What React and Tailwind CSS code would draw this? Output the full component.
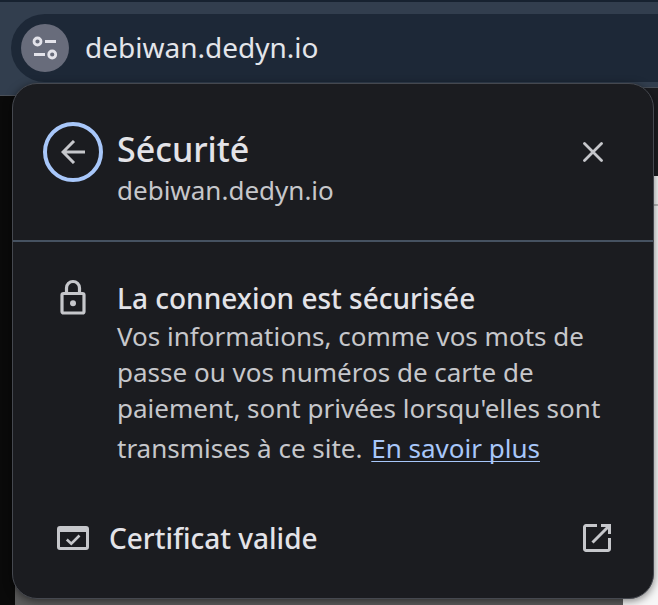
function TuneIcon() {
  return (
    <svg viewBox="0 0 26 24" className="h-6 w-[26px]" fill="none" stroke="currentColor" strokeWidth="2.800" aria-hidden="true">
      <circle cx="5.500" cy="5.500" r="3.500" />
      <path d="M13 5.500h11M2 18.500h11" />
      <circle cx="20.200" cy="18.500" r="3.500" />
    </svg>
  );
}

function BackIcon() {
  return (
    <svg viewBox="0 0 24 24" className="h-6 w-6" fill="none" stroke="currentColor" strokeWidth="3" aria-hidden="true">
      <path d="M24 12H2M13 1L2 12l11 11" />
    </svg>
  );
}

function CloseIcon() {
  return (
    <svg viewBox="0 0 20 20" className="h-5 w-5" fill="none" stroke="currentColor" strokeWidth="2.800" strokeLinecap="round" aria-hidden="true">
      <path d="M1.500 1.500l17 17M18.500 1.500l-17 17" />
    </svg>
  );
}

function LockIcon() {
  return (
    <svg viewBox="0 0 26 38" className="h-[38px] w-[26px]" fill="none" stroke="currentColor" strokeWidth="3.200" aria-hidden="true">
      <rect x="2" y="15.500" width="22" height="19.500" rx="1.500" />
      <path d="M6.500 15V10a6.500 6.500 0 0 1 13 0V15" />
      <circle cx="13" cy="25.200" r="3" fill="currentColor" stroke="none" />
    </svg>
  );
}

function CertificateIcon() {
  return (
    <svg viewBox="0 0 32 24" className="h-6 w-8" fill="none" stroke="currentColor" strokeWidth="3" aria-hidden="true">
      <rect x="1.500" y="1.500" width="29" height="21" rx="1.500" />
      <path d="M1.500 4h29" strokeWidth="4" />
      <path d="M9.800 13.500l4.500 4.200L22.500 9.500" strokeWidth="2.600" />
    </svg>
  );
}

function OpenIcon() {
  return (
    <svg viewBox="0 0 28 28" className="h-7 w-7" fill="none" stroke="currentColor" strokeWidth="3" aria-hidden="true">
      <path d="M14 1.500H3A1.500 1.500 0 0 0 1.500 3v22A1.500 1.500 0 0 0 3 26.500h22a1.500 1.500 0 0 0 1.500-1.500V14" />
      <path d="M18 1.500h8.500V10M26 2L9.500 18.500" />
    </svg>
  );
}

function AddressBar() {
  return (
    <header className="h-[87px] border-t-2 border-[#172230] bg-[#323e4e] pt-3 pl-[11px]">
      <div className="flex h-[68px] items-center gap-4 rounded-l-full bg-[#1d2837] pl-[10px]">
        <button type="button" aria-label="Informations sur le site" className="flex size-12 items-center justify-center rounded-full bg-[#686c7b] text-[#e3e3ea]">
          <TuneIcon />
        </button>
        <input
          type="text"
          aria-label="Adresse"
          defaultValue="debiwan.dedyn.io"
          className="min-w-0 flex-1 bg-transparent pb-0.5 text-[28px] leading-9 text-[#e3e5ea] outline-none"
        />
      </div>
    </header>
  );
}

function PageBehind() {
  return (
    <div className="flex flex-1" aria-hidden="true">
      <div className="w-[15px] bg-[#0a0a0a]">
        <div className="h-[9px] border-b border-[#4a5059] bg-[#323e4e]" />
      </div>
      <div className="flex-1 bg-[#5b5b5b]">
        <div className="h-[9px] border-b border-[#4a5059] bg-[#323e4e]" />
      </div>
      <div className="w-[35px] bg-[#f7f7f7]">
        <div className="h-[89px] border-t border-[#4a5059] bg-[#1b1c20]" />
        <div className="h-[30px] border-b-2 border-[#bdbdbd]" />
      </div>
    </div>
  );
}

function SecurityPopup() {
  return (
    <section
      aria-labelledby="security-title"
      className="absolute top-[83px] right-1 left-3 rounded-[25px] border border-[#45484f] bg-[#1b1c20] text-[#c6c7cb] shadow-[0_2px_8px_rgba(0,0,0,0.5)]"
    >
      <div className="flex items-start gap-[14px] border-b-2 border-[#465261] pt-[38px] pr-[50px] pb-8 pl-[30px]">
        <button type="button" aria-label="Retour" className="flex size-[60px] shrink-0 items-center justify-center rounded-full border-4 border-[#a8c7fa]">
          <BackIcon />
        </button>
        <div className="min-w-0 flex-1">
          <h1 id="security-title" className="pt-1 text-[34px] leading-[46px] font-medium text-[#e3e3e8]">Sécurité</h1>
          <p className="text-[26px] leading-9">debiwan.dedyn.io</p>
        </div>
        <button type="button" aria-label="Fermer" className="mt-[20px]">
          <CloseIcon />
        </button>
      </div>

      <div className="flex items-start gap-[31px] pt-9 pr-[44px] pl-[47px]">
        <LockIcon />
        <div className="min-w-0 flex-1">
          <h2 className="text-[28px] leading-10 font-medium text-[#e3e3e8]">La connexion est sécurisée</h2>
          <p className="text-[26px] leading-9">
            Vos informations, comme vos mots de passe ou vos numéros de carte de paiement, sont privées lorsqu'elles sont transmises à ce site.{' '}
            <a href="#" className="ml-0.5 inline-block pt-1 text-[#a8c7fa] underline decoration-1 underline-offset-3 [text-decoration-skip-ink:none]">En savoir plus</a>
          </p>
        </div>
      </div>

      <button type="button" className="mt-[52px] mb-10 flex w-full items-center gap-5 pr-[42px] pl-[44px] text-left">
        <CertificateIcon />
        <span className="flex-1 text-[28px] leading-10 font-medium text-[#e3e3e8]">Certificat valide</span>
        <OpenIcon />
      </button>
    </section>
  );
}

export default function App() {
  return (
    <main className="relative flex min-h-screen flex-col overflow-hidden bg-[#0a0a0a] font-['Noto_Sans',sans-serif]">
      <AddressBar />
      <PageBehind />
      <SecurityPopup />
    </main>
  );
}
